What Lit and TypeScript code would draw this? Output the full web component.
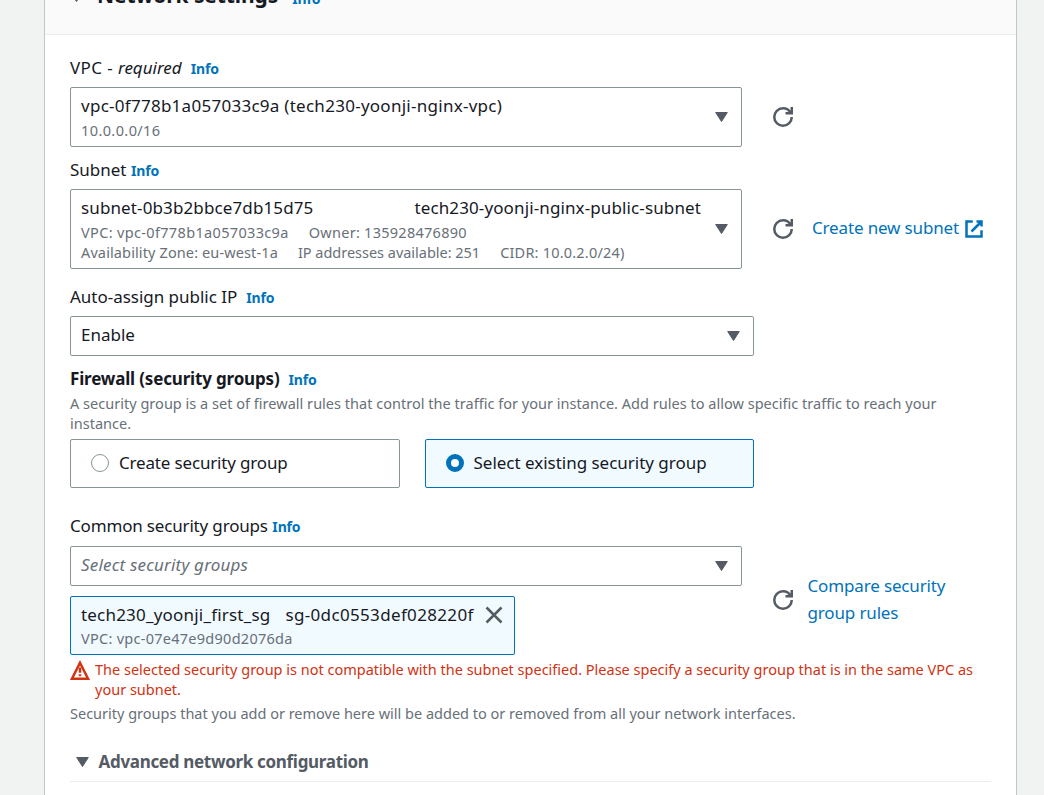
import { LitElement, html, css, svg } from "lit";
import { customElement, property, state } from "lit/decorators.js";
import { classMap } from "lit/directives/class-map.js";

const paths: Record<string, unknown> = {
  refresh: svg`<path d="M10 5h5V0" /><path d="M15 8c0 3.87-3.13 7-7 7s-7-3.13-7-7 3.13-7 7-7c2.79 0 5.2 1.63 6.33 4" />`,
  external: svg`<path d="M10 2h4v4M6 10l8-8M14 9.05V14H2V2h5" />`,
  close: svg`<path d="M2 2l12 12M14 2L2 14" />`,
  warning: svg`<path d="M8 2.2L14.4 15H1.6z" /><path d="M8 6v4.2M8 11.4v1.6" />`,
};

@customElement("ui-icon")
export class UiIcon extends LitElement {
  @property() name = "refresh";

  static styles = css`
    :host {
      display: block;
      flex: none;
      width: 20px;
      height: 20px;
    }
    svg {
      display: block;
      width: 20px;
      height: 20px;
      fill: none;
      stroke: currentColor;
      stroke-width: 2;
      overflow: visible;
    }
  `;

  render() {
    return html`<svg viewBox="0 0 16 16">${paths[this.name]}</svg>`;
  }
}

@customElement("ui-caret")
export class UiCaret extends LitElement {
  static styles = css`
    :host {
      display: block;
      flex: none;
      width: 13px;
      height: 10px;
      color: #545b64;
    }
    svg {
      display: block;
      fill: currentColor;
      stroke: currentColor;
      stroke-width: 1;
      stroke-linejoin: round;
    }
  `;

  render() {
    return html`<svg width="13" height="10" viewBox="0 0 13 10"><path d="M.7.5h11.6L6.5 9.5z" /></svg>`;
  }
}

@customElement("app-root")
export class AppRoot extends LitElement {
  @state() private existing = true;

  static styles = css`
    :host {
      display: block;
      height: 795px;
      overflow: hidden;
      background: #f1f3f3;
      color: #16191f;
      font: 17px/25px "Noto Sans", "Open Sans", sans-serif;
    }
    * {
      box-sizing: border-box;
    }
    .panel {
      width: 973px;
      height: 795px;
      margin-left: 44px;
      background: #fff;
      border: solid #bfc8c8;
      border-width: 0 1px;
    }
    .head {
      display: flex;
      align-items: flex-end;
      height: 35px;
      padding: 0 25px 24px;
      background: #fafafa;
      border-bottom: 1px solid #eaeded;
      overflow: hidden;
      white-space: nowrap;
    }
    .head ui-caret {
      margin: 0 14px 8px 0;
    }
    .title {
      font-size: 21px;
      line-height: 30px;
      font-weight: 700;
      letter-spacing: -0.1px;
    }
    .head .info {
      margin-left: 14px;
      line-height: 22px;
    }
    .body {
      display: flex;
      flex-direction: column;
      padding: 20px 25px 0;
    }
    .label {
      display: flex;
      align-items: baseline;
      height: 25px;
      white-space: nowrap;
    }
    .label.strong {
      font-weight: 700;
    }
    .info {
      margin-left: 9px;
      color: #0073bb;
      font-size: 14px;
      font-weight: 700;
      letter-spacing: -0.15px;
    }
    .info.near {
      margin-left: 4.5px;
    }
    .row {
      display: flex;
      align-items: center;
      margin-top: 7px;
      margin-bottom: 10px;
    }
    .row.tall {
      margin-bottom: 15px;
    }
    .row.groups {
      margin: 8px 0 5px;
    }
    .column {
      display: flex;
      flex-direction: column;
      align-items: flex-start;
      gap: 10px;
    }
    .select {
      display: flex;
      align-items: center;
      justify-content: space-between;
      width: 672px;
      padding: 5px 13px 5px 10px;
      background: #fff;
      border: 1px solid #879596;
      border-radius: 2px;
      white-space: nowrap;
    }
    .select.wide {
      width: 684px;
    }
    .select.single {
      height: 40px;
      padding-bottom: 8px;
    }
    .select.single ui-caret {
      margin-top: 3px;
    }
    .lines {
      display: flex;
      flex-direction: column;
      padding-bottom: 1px;
    }
    .value {
      display: flex;
      margin-bottom: 2px;
    }
    .meta {
      display: flex;
      gap: 20px;
      color: #687078;
      font-size: 14.5px;
      line-height: 20px;
    }
    .name {
      margin-left: 101px;
    }
    .placeholder {
      color: #687078;
      font-style: italic;
      letter-spacing: 0.18px;
    }
    .row > ui-icon {
      margin-left: 31px;
      color: #545b64;
    }
    .row.groups > ui-icon {
      margin-top: -2px;
    }
    .link {
      display: flex;
      align-items: center;
      margin-left: 19px;
      color: #0073bb;
      letter-spacing: -0.15px;
      white-space: nowrap;
    }
    .link span {
      margin: -4px 5px 0 0;
    }
    .link.stacked {
      display: block;
      width: 160px;
      margin-left: 14.5px;
      margin-top: -4px;
      line-height: 27px;
      white-space: normal;
    }
    .hint {
      margin-top: 2px;
      color: #687078;
      font-size: 14.5px;
      line-height: 20px;
      letter-spacing: 0.02px;
    }
    .tiles {
      display: grid;
      grid-template-columns: 330px 329px;
      column-gap: 25px;
      margin: 6px 0 25px;
    }
    .tile {
      display: flex;
      align-items: center;
      height: 49px;
      padding: 0 20px 2px;
      border: 1px solid #879596;
      border-radius: 2px;
      white-space: nowrap;
      cursor: pointer;
    }
    .tile.on {
      padding-left: 19.5px;
      background: #f1faff;
      border-color: #0073bb;
    }
    .dot {
      width: 18px;
      height: 18px;
      margin: 1px 10px 0 0;
      background: #fff;
      border: 1px solid #879596;
      border-radius: 50%;
    }
    .on .dot {
      border: 5.5px solid #0073bb;
    }
    .chip {
      display: flex;
      align-items: flex-start;
      justify-content: space-between;
      width: 445px;
      height: 59px;
      padding: 5px 10px 4px;
      background: #f1faff;
      border: 1px solid #0073bb;
      border-radius: 2px;
      white-space: nowrap;
    }
    .chip .value {
      gap: 15px;
      margin-bottom: 1px;
    }
    .chip ui-icon {
      margin-top: 3px;
      color: #545b64;
    }
    .error {
      display: flex;
      gap: 5px;
      color: #d13212;
      font-size: 14.5px;
      line-height: 20px;
    }
    .error span {
      margin: -1px 0 1px;
    }
    .note {
      margin-top: 3px;
      letter-spacing: 0;
    }
    .advanced {
      display: flex;
      align-items: center;
      height: 33px;
      margin-top: 26px;
      padding: 0 0 8px 5.5px;
      border-bottom: 1px solid #eaeded;
      color: #545b64;
      font-weight: 700;
      letter-spacing: -0.31px;
    }
    .advanced ui-caret {
      margin: 1px 10px 0 0;
    }
    .tn {
      letter-spacing: -0.17px;
    }
    .tc {
      letter-spacing: -0.02px;
    }
    .t1 {
      letter-spacing: 0.12px;
    }
    .t2 {
      letter-spacing: 0.2px;
    }
    .t3 {
      letter-spacing: 0.27px;
    }
    .t4 {
      letter-spacing: 0.34px;
    }
    .t5 {
      letter-spacing: 0.4px;
    }
  `;

  render() {
    return html`
      <section class="panel">
        <header class="head">
          <ui-caret></ui-caret>
          <span class="title">Network settings</span>
          <span class="info">Info</span>
        </header>
        <div class="body">
          <div class="label"><span class="t5">VPC -&nbsp;</span><i>required</i><span class="info">Info</span></div>
          <div class="row">
            <div class="select">
              <div class="lines">
                <div class="value t3">vpc-0f778b1a057033c9a (tech230-yoonji-nginx-vpc)</div>
                <div class="meta t5">10.0.0.0/16</div>
              </div>
              <ui-caret></ui-caret>
            </div>
            <ui-icon name="refresh"></ui-icon>
          </div>

          <div class="label"><span class="tc">Subnet</span><span class="info near">Info</span></div>
          <div class="row tall">
            <div class="select">
              <div class="lines">
                <div class="value t1">
                  <span>subnet-0b3b2bbce7db15d75</span><span class="name">tech230-yoonji-nginx-public-subnet</span>
                </div>
                <div class="meta"><span class="t4">VPC: vpc-0f778b1a057033c9a</span><span class="t3">Owner: 135928476890</span></div>
                <div class="meta">
                  <span class="t1">Availability Zone: eu-west-1a</span><span class="tc">IP addresses available: 251</span
                  ><span class="t2">CIDR: 10.0.2.0/24)</span>
                </div>
              </div>
              <ui-caret></ui-caret>
            </div>
            <ui-icon name="refresh"></ui-icon>
            <a class="link"><span>Create new subnet</span><ui-icon name="external"></ui-icon></a>
          </div>

          <div class="label"><span class="tc">Auto-assign public IP</span><span class="info">Info</span></div>
          <div class="row">
            <div class="select wide single"><span>Enable</span><ui-caret></ui-caret></div>
          </div>

          <div class="label strong"><span class="tn">Firewall (security groups)</span><span class="info">Info</span></div>
          <div class="hint">
            A security group is a set of firewall rules that control the traffic for your instance. Add rules to allow
            specific traffic to reach your instance.
          </div>
          <div class="tiles">
            <div class=${classMap({ tile: true, on: !this.existing })} @click=${() => (this.existing = false)}>
              <span class="dot"></span><span class="tn">Create security group</span>
            </div>
            <div class=${classMap({ tile: true, on: this.existing })} @click=${() => (this.existing = true)}>
              <span class="dot"></span><span class="tc">Select existing security group</span>
            </div>
          </div>

          <div class="label"><span class="tn">Common security groups</span><span class="info near">Info</span></div>
          <div class="row groups">
            <div class="column">
              <div class="select single"><span class="placeholder">Select security groups</span><ui-caret></ui-caret></div>
              <div class="chip">
                <div class="lines">
                  <div class="value"><span class="t2">tech230_yoonji_first_sg</span><span class="t4">sg-0dc0553def028220f</span></div>
                  <div class="meta t3">VPC: vpc-07e47e9d90d2076da</div>
                </div>
                <ui-icon name="close"></ui-icon>
              </div>
            </div>
            <ui-icon name="refresh"></ui-icon>
            <a class="link stacked">Compare security group rules</a>
          </div>

          <div class="error">
            <ui-icon name="warning"></ui-icon>
            <span
              >The selected security group is not compatible with the subnet specified. Please specify a security group that
              is in the same VPC as your subnet.</span
            >
          </div>
          <div class="hint note">
            Security groups that you add or remove here will be added to or removed from all your network interfaces.
          </div>
          <div class="advanced"><ui-caret></ui-caret><span>Advanced network configuration</span></div>
        </div>
      </section>
    `;
  }
}
